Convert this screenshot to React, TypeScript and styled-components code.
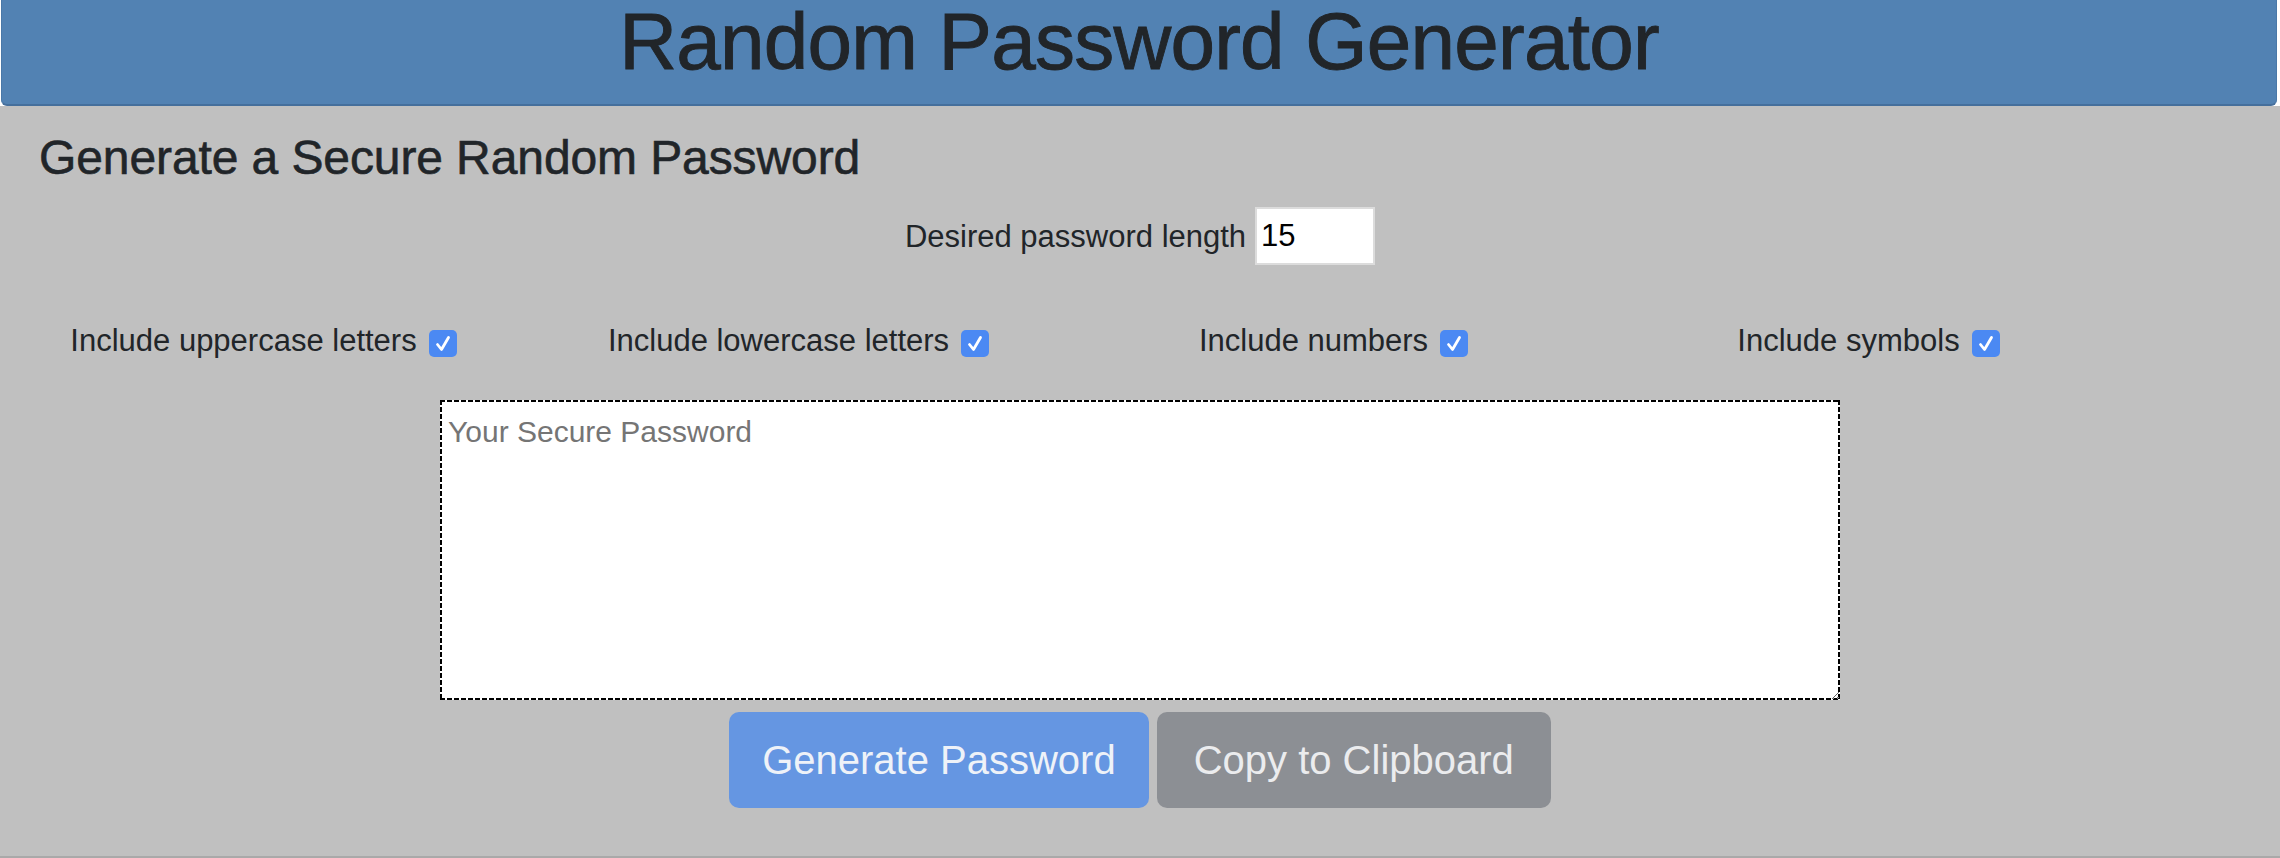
import React from "react";
import styled, { createGlobalStyle } from "styled-components";

const GlobalStyle = createGlobalStyle`
  * { box-sizing: border-box; }
  html, body {
    margin: 0;
    padding: 0;
    background: #ffffff;
    font-family: "Liberation Sans", Arial, sans-serif;
    color: #212529;
  }
`;

const Page = styled.div`
  display: flex;
  flex-direction: column;
  width: 2280px;
`;

const Header = styled.header`
  margin: 0 3px 0 1px;
  padding: 2px 0 22px;
  background: #5282b3;
  border: 1px solid #4a78a8;
  border-top: none;
  border-bottom: 2px solid #456f9c;
  border-radius: 0 0 6px 6px;
  text-align: center;
`;

const Title = styled.h1`
  margin: 0;
  font-size: 80px;
  line-height: 80px;
  font-weight: 400;
  letter-spacing: -0.75px;
  -webkit-text-stroke: 0.9px #212529;
  color: #212529;
`;

const Main = styled.main`
  display: flex;
  flex-direction: column;
  align-items: center;
  background: #c0c0c0;
  border-bottom: 2px solid #a9a9a9;
  padding: 23px 0 48px;
`;

const Subtitle = styled.h4`
  align-self: stretch;
  margin: 0;
  padding-left: 39px;
  font-size: 48px;
  line-height: 58px;
  font-weight: 400;
  letter-spacing: -0.1px;
  -webkit-text-stroke: 0.6px #212529;
`;

const LengthRow = styled.div`
  display: flex;
  align-items: center;
  gap: 9px;
  margin-top: 20px;
  font-size: 31px;
`;

const LengthLabel = styled.label`
  position: relative;
  top: 1px;
`;

const LengthInput = styled.input`
  width: 120px;
  height: 58px;
  padding: 0 4px;
  border: 2px solid #dcdcdc;
  background: #ffffff;
  font-family: "Liberation Sans", Arial, sans-serif;
  font-size: 31px;
  color: #000000;
  outline: none;
`;

const OptionsGrid = styled.div`
  align-self: flex-start;
  display: grid;
  grid-template-columns: repeat(4, 535px);
  margin-top: 53px;
  height: 46px;
`;

const Option = styled.label`
  display: flex;
  justify-content: center;
  align-items: center;
  gap: 12px;
  font-size: 31px;
  line-height: 46px;
`;

const CheckBox = styled.span`
  display: inline-flex;
  align-items: center;
  justify-content: center;
  width: 28px;
  height: 27px;
  margin-top: 5px;
  margin-right: 8px;
  border-radius: 5px;
  background: #4b89f3;
`;

const Output = styled.textarea`
  margin-top: 36px;
  width: 1400px;
  height: 300px;
  padding: 9px 8px;
  border: none;
  outline: none;
  font-family: "Liberation Sans", Arial, sans-serif;
  font-size: 30px;
  line-height: 45px;
  color: #212529;
  background:
    linear-gradient(90deg, #000 5px, transparent 5px) 0 0 / 7px 2px repeat-x,
    linear-gradient(90deg, #000 5px, transparent 5px) 0 100% / 7px 2px repeat-x,
    linear-gradient(180deg, #000 5px, transparent 5px) 0 0 / 2px 7px repeat-y,
    linear-gradient(180deg, #000 5px, transparent 5px) 100% 0 / 2px 7px repeat-y,
    #ffffff;
  &::placeholder {
    color: #757575;
  }
`;

const ButtonRow = styled.div`
  display: flex;
  gap: 8px;
  margin-top: 12px;
`;

const Button = styled.button<{ $variant: "primary" | "secondary" }>`
  height: 96px;
  padding: 0 ${(p) => (p.$variant === "primary" ? "31px" : "35px")};
  border: 2px solid transparent;
  border-radius: 10px;
  font-family: "Liberation Sans", Arial, sans-serif;
  font-size: 40px;
  line-height: 60px;
  cursor: pointer;
  background: ${(p) => (p.$variant === "primary" ? "#6596e2" : "#8c8f94")};
  color: ${(p) => (p.$variant === "primary" ? "#eef2f8" : "#ebecee")};
`;

const Check = () => (
  <svg width="28" height="27" viewBox="0 0 28 27" fill="none">
    <path
      d="M8.5 14.5 L12.5 19.5 L19.5 7.5"
      stroke="#ffffff"
      strokeWidth="2.8"
      strokeLinecap="round"
      strokeLinejoin="round"
    />
  </svg>
);

const options = [
  "Include uppercase letters",
  "Include lowercase letters",
  "Include numbers",
  "Include symbols",
];

export default function App() {
  return (
    <Page>
      <GlobalStyle />
      <Header>
        <Title>Random Password Generator</Title>
      </Header>
      <Main>
        <Subtitle>Generate a Secure Random Password</Subtitle>
        <LengthRow>
          <LengthLabel htmlFor="len">Desired password length</LengthLabel>
          <LengthInput id="len" type="text" defaultValue="15" />
        </LengthRow>
        <OptionsGrid>
          {options.map((o) => (
            <Option key={o}>
              <span>{o}</span>
              <CheckBox>
                <Check />
              </CheckBox>
            </Option>
          ))}
        </OptionsGrid>
        <Output placeholder="Your Secure Password" readOnly />
        <ButtonRow>
          <Button $variant="primary">Generate Password</Button>
          <Button $variant="secondary">Copy to Clipboard</Button>
        </ButtonRow>
      </Main>
    </Page>
  );
}
